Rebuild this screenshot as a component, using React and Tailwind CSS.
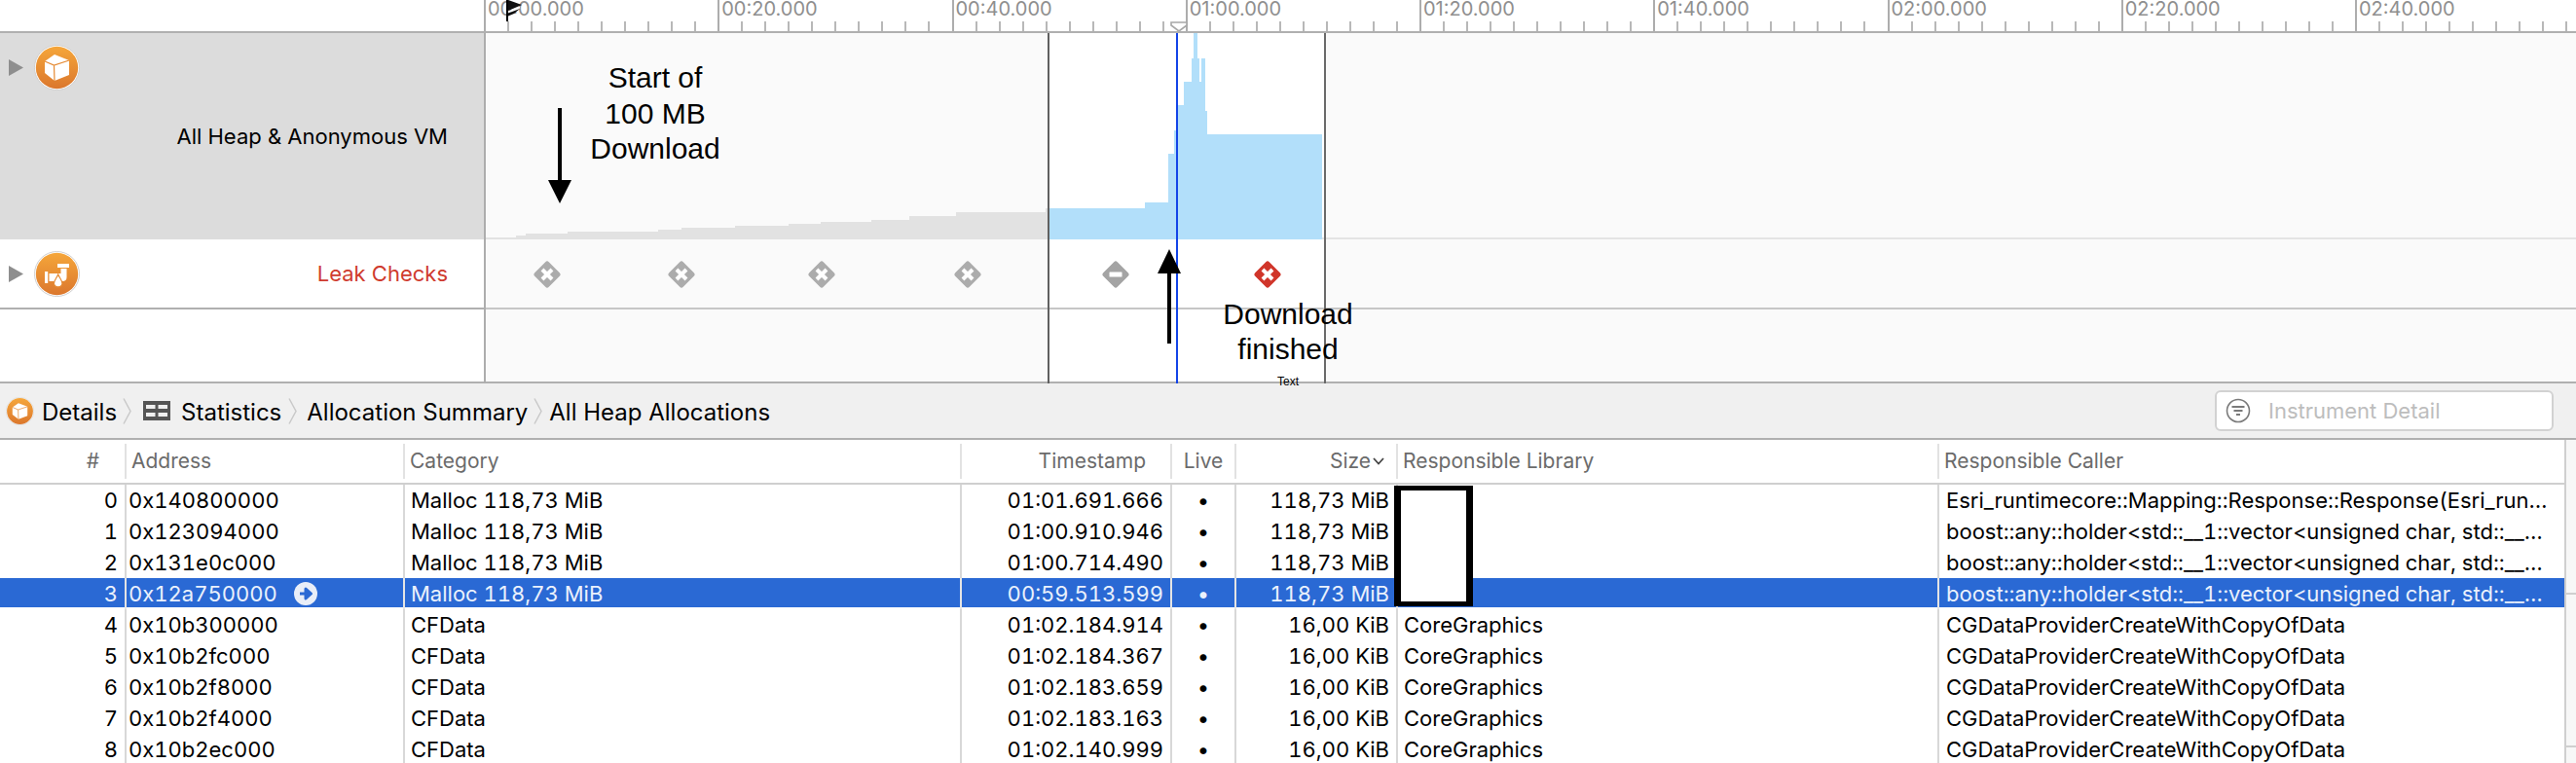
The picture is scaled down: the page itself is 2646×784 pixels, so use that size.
import { Fragment } from 'react';

const MAJOR_LABELS = ['00:00.000', '00:20.000', '00:40.000', '01:00.000', '01:20.000', '01:40.000', '02:00.000', '02:20.000', '02:40.000'];
const MINOR_TICKS = [1, 2, 3, 4, 5, 6, 7, 8, 9];

const BIG = 'Malloc 118,73 MiB';
const BOOST = 'boost::any::holder<std::__1::vector<unsigned char, std::__…';
const CG = 'CGDataProviderCreateWithCopyOfData';

const ROWS = [
  ['0', '0x140800000', BIG, '01:01.691.666', '118,73 MiB', '', 'Esri_runtimecore::Mapping::Response::Response(Esri_run…'],
  ['1', '0x123094000', BIG, '01:00.910.946', '118,73 MiB', '', BOOST],
  ['2', '0x131e0c000', BIG, '01:00.714.490', '118,73 MiB', '', BOOST],
  ['3', '0x12a750000', BIG, '00:59.513.599', '118,73 MiB', '', BOOST],
  ['4', '0x10b300000', 'CFData', '01:02.184.914', '16,00 KiB', 'CoreGraphics', CG],
  ['5', '0x10b2fc000', 'CFData', '01:02.184.367', '16,00 KiB', 'CoreGraphics', CG],
  ['6', '0x10b2f8000', 'CFData', '01:02.183.659', '16,00 KiB', 'CoreGraphics', CG],
  ['7', '0x10b2f4000', 'CFData', '01:02.183.163', '16,00 KiB', 'CoreGraphics', CG],
  ['8', '0x10b2ec000', 'CFData', '01:02.140.999', '16,00 KiB', 'CoreGraphics', CG],
];

const COLS = 'grid grid-cols-[128px_286px_572px_216px_66px_166px_556px_644px]';

// page coordinates, the viewBox below starts at the chart's own corner
const GRAY_STEPS = '499,246 499,244 530,244 530,242 540,242 540,240 583,240 583,238 676,238 676,236 700,236 700,234 755,234 755,232 810,232 810,230 843,230 843,228 895,228 895,226 934,226 934,222 982,222 982,218 1074,218 1074,214 1077,214 1077,246';
const BLUE_STEPS = '1078,246 1078,214 1176,214 1176,208 1200,208 1200,158 1206,158 1206,134 1210,134 1210,108 1216,108 1216,84 1224,84 1224,60 1226,60 1226,34 1230,34 1230,60 1232,60 1232,84 1234,84 1234,60 1238,60 1238,114 1240,114 1240,138 1358,138 1358,246';

function OrangeBadge({ className, children }) {
  return (
    <svg viewBox="0 0 47 47" className={className}>
      <defs>
        <linearGradient id="badge" x1="0" y1="0" x2="0" y2="1">
          <stop offset="0" stopColor="#f5a63a" />
          <stop offset="1" stopColor="#db772d" />
        </linearGradient>
      </defs>
      <circle cx="23.5" cy="23.5" r="23" fill="#fff" stroke="#cfcfcf" strokeWidth="1" />
      <circle cx="23.5" cy="23.5" r="21.7" fill="url(#badge)" />
      {children}
    </svg>
  );
}

function CubeGlyph() {
  return (
    <g>
      <path d="M21 10 L36 16 L36 31 L21 37 L11 29 L11 17 Z" fill="#fff" />
      <path d="M11 17 L20.5 21 L36 16 M20.5 21 L21 37" fill="none" stroke="#e58a33" strokeWidth="1.2" />
    </g>
  );
}

function FaucetGlyph() {
  return (
    <g fill="#fff">
      <rect x="24" y="13" width="12" height="4" />
      <path d="M27.5 18 H33.5 V27 Q33.5 31 29 31 H15.5 V23 H27.5 Z" />
      <rect x="11" y="21" width="3.2" height="12" />
      <path d="M24.7 24 C26 27.5 29 30 29 33.5 A4.4 4.4 0 0 1 20.4 33.5 C20.4 30 23.4 27.5 24.7 24 Z" stroke="#e58a33" strokeWidth="1.2" />
    </g>
  );
}

function Disclosure() {
  return (
    <svg viewBox="0 0 15 17" className="w-[15px] h-[17px] shrink-0">
      <path d="M0 0 L15 8.5 L0 17 Z" fill="#8e8e8e" />
    </svg>
  );
}

function LeakMarker({ className, color, minus }) {
  return (
    <svg viewBox="0 0 28 28" className={className}>
      <path d="M14 3 L25 14 L14 25 L3 14 Z" fill={color} stroke={color} strokeWidth="5" strokeLinejoin="round" />
      {minus ? (
        <rect x="7.5" y="11.5" width="13" height="5" rx="0.5" fill="#fff" />
      ) : (
        <path d="M9 9 L19 19 M19 9 L9 19" stroke="#fff" strokeWidth="4" />
      )}
    </svg>
  );
}

function Crumb() {
  return (
    <svg viewBox="0 0 9 27" className="w-[9px] h-[27px] shrink-0">
      <path d="M1 0.5 L8 13.5 L1 26.5" fill="none" stroke="#c9c9c9" strokeWidth="1.5" />
    </svg>
  );
}

function Ruler() {
  return (
    <div className="relative flex h-[34px] shrink-0 border-b-2 border-[#b0b0b0] bg-white overflow-hidden">
      <div className="w-[497px] shrink-0" />
      {MAJOR_LABELS.map((label) => (
        <div key={label} className="w-[240.25px] shrink-0 flex flex-col border-l-2 border-[#adadad]">
          <div className="h-[22px] pl-[2px] text-[20px] leading-[19px] text-[#8f8f8f] font-['Inter',sans-serif]">{label}</div>
          <div className="flex h-[10px]">
            <div className="w-[22px] shrink-0" />
            {MINOR_TICKS.map((t) => (
              <div key={t} className="w-[24.025px] shrink-0 border-l-2 border-[#b8b8b8]" />
            ))}
          </div>
        </div>
      ))}

      {/* start flag */}
      <svg viewBox="0 0 18 22" className="absolute left-[520px] top-0 w-[18px] h-[22px]">
        <rect x="0" y="0" width="2" height="22" fill="#000" />
        <path d="M2 0 L16 5 L2 11 Z" fill="#111" />
        <path d="M2 12.5 L14 7.5" stroke="#fff" strokeWidth="1.5" />
        <path d="M2 13.5 L14 9 L8 14 L2 16.5 Z" fill="#111" />
      </svg>

      {/* inspection head */}
      <svg viewBox="0 0 18 11" className="absolute left-[1202px] top-[22px] w-[18px] h-[11px]">
        <path d="M1 1 H17 V4 L9 10 L1 4 Z" fill="#fff" stroke="#a8a8a8" strokeWidth="1.6" />
      </svg>
    </div>
  );
}

function TrackLabels() {
  return (
    <div className="w-[497px] shrink-0 flex flex-col font-['Inter',sans-serif]">
      <div className="h-[212px] bg-[#dcdcdc] pt-[12px] pl-[9px] pr-[37px] flex flex-col">
        <div className="flex items-center gap-[11px]">
          <Disclosure />
          <OrangeBadge className="w-[47px] h-[47px]"><CubeGlyph /></OrangeBadge>
        </div>
        <div className="mt-[33px] text-right text-[22px] leading-[28px] text-black">All Heap &amp; Anonymous VM</div>
      </div>
      <div className="h-[72px] border-b-2 border-[#b0b0b0] pl-[9px] pr-[37px] flex items-center justify-between">
        <div className="flex items-center gap-[11px]">
          <Disclosure />
          <OrangeBadge className="w-[47px] h-[47px]"><FaucetGlyph /></OrangeBadge>
        </div>
        <div className="text-[22px] leading-[28px] text-[#cf3b2e]">Leak Checks</div>
      </div>
      <div className="h-[76px] border-b-2 border-[#b0b0b0]" />
    </div>
  );
}

function Timeline() {
  return (
    <div className="relative flex-1 flex flex-col border-l-2 border-[#adadad] bg-[#fafafa]">
      {/* inspected range */}
      <div className="absolute top-0 bottom-0 left-[579px] w-[282px] bg-white" />

      <div className="relative h-[212px] border-b-2 border-[#e4e4e4]">
        <svg viewBox="499 34 2147 212" className="absolute left-0 top-0 w-[2147px] h-[212px]">
          <polygon points={GRAY_STEPS} fill="#e2e2e2" />
          <polygon points={BLUE_STEPS} fill="#b2dffa" />
        </svg>
      </div>
      <div className="relative h-[72px] border-b-2 border-[#c6c6c6]">
        <LeakMarker className="absolute left-[49px] top-[22px] w-[28px] h-[28px]" color="#acacac" />
        <LeakMarker className="absolute left-[187px] top-[22px] w-[28px] h-[28px]" color="#acacac" />
        <LeakMarker className="absolute left-[331px] top-[22px] w-[28px] h-[28px]" color="#acacac" />
        <LeakMarker className="absolute left-[481px] top-[22px] w-[28px] h-[28px]" color="#acacac" />
        <LeakMarker className="absolute left-[633px] top-[22px] w-[28px] h-[28px]" color="#a4a4a4" minus />
        <LeakMarker className="absolute left-[789px] top-[22px] w-[28px] h-[28px]" color="#d0352a" />
      </div>
      <div className="relative h-[76px] border-b-2 border-[#b0b0b0]" />

      {/* range and cursor lines */}
      <div className="absolute top-0 bottom-0 left-[577px] w-[2px] bg-[#606060]" />
      <div className="absolute top-0 bottom-0 left-[861px] w-[2px] bg-[#6a6a6a]" />
      <div className="absolute top-0 bottom-0 left-[709px] w-[2px] bg-[#1344e8]" />

      {/* pasted annotations */}
      <div className="absolute left-[74px] top-[28px] w-[200px] text-center text-[30px] leading-[36.5px] text-black font-['Liberation_Sans',sans-serif]">
        Start of<br />100 MB<br />Download
      </div>
      <svg viewBox="0 0 26 98" className="absolute left-[63px] top-[77px] w-[26px] h-[98px]">
        <rect x="11" y="0" width="4" height="76" fill="#000" />
        <path d="M1 74 H25 L13 98 Z" fill="#000" />
      </svg>
      <svg viewBox="0 0 26 97" className="absolute left-[689px] top-[222px] w-[26px] h-[97px]">
        <rect x="11" y="22" width="4" height="75" fill="#000" />
        <path d="M1 25 H25 L13 0 Z" fill="#000" />
      </svg>
      <div className="absolute left-[724px] top-[271px] w-[200px] text-center text-[30px] leading-[35.5px] text-black font-['Liberation_Sans',sans-serif]">
        Download<br />finished
      </div>
      <div className="absolute left-[794px] top-[351px] w-[60px] text-center text-[12px] leading-[14px] text-black font-['Liberation_Sans',sans-serif]">Text</div>
    </div>
  );
}

function DetailsBar() {
  return (
    <div className="flex h-[58px] shrink-0 items-center justify-between border-b-2 border-[#b0b0b0] bg-[#f0f0f0] pl-[6px] pr-[23px] text-black font-['Inter',sans-serif]">
      <div className="flex items-center text-[24px]">
        <OrangeBadge className="w-[29px] h-[29px]"><CubeGlyph /></OrangeBadge>
        <span className="ml-[8px] mt-[4px]">Details</span>
        <span className="ml-[6px]"><Crumb /></span>
        <svg viewBox="0 0 28 20" className="ml-[12px] w-[28px] h-[20px]">
          <rect width="28" height="20" fill="#555" />
          <rect x="3" y="4" width="9.5" height="4" fill="#f0f0f0" />
          <rect x="15.5" y="4" width="9.5" height="4" fill="#f0f0f0" />
          <rect x="3" y="12" width="9.5" height="4" fill="#f0f0f0" />
          <rect x="15.5" y="12" width="9.5" height="4" fill="#f0f0f0" />
        </svg>
        <span className="ml-[11px] mt-[4px]">Statistics</span>
        <span className="ml-[7px]"><Crumb /></span>
        <span className="ml-[10px] mt-[4px]">Allocation Summary</span>
        <span className="ml-[6px]"><Crumb /></span>
        <span className="ml-[7px] mt-[4px]">All Heap Allocations</span>
      </div>
      <div className="flex h-[42px] w-[348px] items-center rounded-[6px] border-2 border-[#d2d2d2] bg-white pl-[9px] text-[22px]">
        <svg viewBox="0 0 26 26" className="w-[26px] h-[26px]">
          <circle cx="13" cy="13" r="11.5" fill="none" stroke="#7a7a7a" strokeWidth="1.6" />
          <path d="M6.5 9 H19.5 M8.5 13 H17.5 M11 17 H15" stroke="#7a7a7a" strokeWidth="1.8" />
        </svg>
        <span className="ml-[18px] text-[#bdbdbd]">Instrument Detail</span>
      </div>
    </div>
  );
}

function HeaderRow() {
  const sep = 'h-[36px] border-l-2 border-[#e2e2e2] flex items-center';
  return (
    <div className={`${COLS} h-[46px] items-start pt-[4px] border-b-2 border-[#cfcfcf] text-[21px] text-[#6b6b6b]`}>
      <div className="h-[36px] flex items-center justify-end pr-[26px]">#</div>
      <div className={`${sep} pl-[5px]`}>Address</div>
      <div className={`${sep} pl-[5px]`}>Category</div>
      <div className={`${sep} justify-end pr-[25px]`}>Timestamp</div>
      <div className={`${sep} justify-center`}>Live</div>
      <div className={`${sep} justify-end pr-[12px]`}>
        Size
        <svg viewBox="0 0 12 8" className="ml-[2px] w-[12px] h-[8px]">
          <path d="M1 1 L6 6.5 L11 1" fill="none" stroke="#444" strokeWidth="1.8" />
        </svg>
      </div>
      <div className={`${sep} pl-[5px]`}>Responsible Library</div>
      <div className={`${sep} pl-[5px]`}>Responsible Caller</div>
    </div>
  );
}

function DataRow({ row, selected }) {
  const [idx, addr, cat, time, size, lib, caller] = row;
  const cell = selected ? 'border-l-2 border-[#e4e4e4] whitespace-nowrap overflow-hidden' : 'border-l-2 border-[#d8d8d8] whitespace-nowrap overflow-hidden';
  return (
    <div
      className={`${COLS} h-[32px] text-[22px] leading-[32px] tabular-nums ${
        selected ? 'bg-[linear-gradient(#2a69d4_30px,#ffffff_30px)] text-[#eaf1fc]' : 'text-black'
      }`}
    >
      <div className="text-right pr-[7px]">{idx}</div>
      <div className={`${cell} pl-[2px] flex items-start`}>
        <span>{addr}</span>
        {selected && (
          <svg viewBox="0 0 24 24" className="ml-[17px] mt-[4px] w-[24px] h-[24px]">
            <circle cx="12" cy="12" r="12" fill="#e9eef8" />
            <path d="M6 12 H12 M12 7 L17.5 12 L12 17 Z" fill="#2a69d4" stroke="#2a69d4" strokeWidth="3" strokeLinejoin="round" />
          </svg>
        )}
      </div>
      <div className={`${cell} pl-[6px]`}>{cat}</div>
      <div className={`${cell} text-right pr-[7px]`}>{time}</div>
      <div className={`${cell} text-center`}>•</div>
      <div className={`${cell} text-right pr-[7px]`}>{size}</div>
      <div className={`${cell} pl-[6px]`}>{lib}</div>
      <div className={`${cell} pl-[7px]`}>{caller}</div>
    </div>
  );
}

export default function App() {
  return (
    <div className="flex flex-col w-[2646px] h-[784px] overflow-hidden bg-white">
      <Ruler />
      <div className="flex shrink-0">
        <TrackLabels />
        <Timeline />
      </div>
      <DetailsBar />
      <div className="relative flex flex-1 min-h-0 font-['Inter',sans-serif]">
        <div className="w-[2634px] shrink-0">
          <HeaderRow />
          {ROWS.map((row) => (
            <Fragment key={row[0]}>
              <DataRow row={row} selected={row[0] === '3'} />
            </Fragment>
          ))}
        </div>
        <div className="flex-1 border-l-2 border-[#cfcfcf] bg-[#f7f7f7]">
          <div className="mt-[157px] h-[2px] bg-[#cfcfcf]" />
          <div className="mt-[155px] h-[2px] bg-[#cfcfcf]" />
        </div>

        {/* redaction box drawn over the library column */}
        <div className="absolute left-[1432px] top-[47px] w-[81px] h-[124px] border-x-[7px] border-y-[5px] border-black bg-white" />
      </div>
    </div>
  );
}
